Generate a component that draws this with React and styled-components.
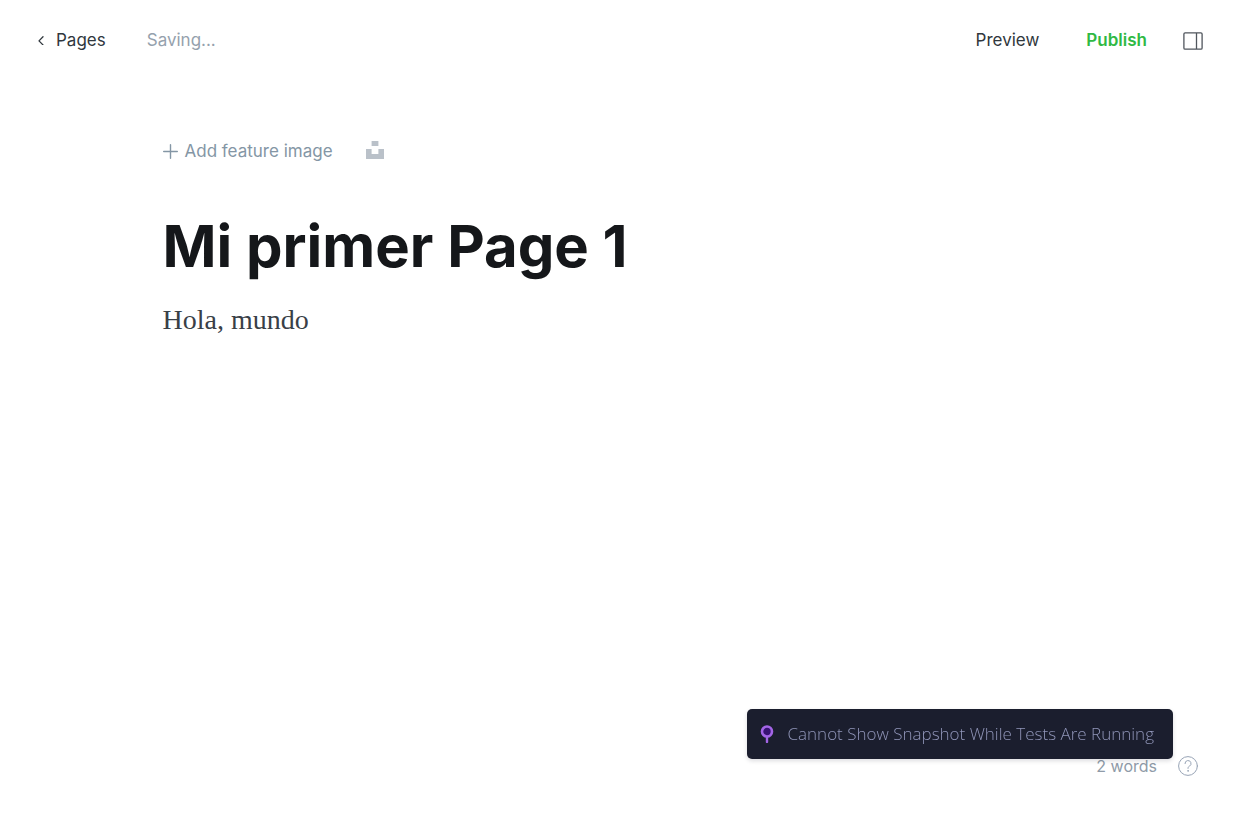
import React from "react";
import styled, { createGlobalStyle } from "styled-components";

const GlobalStyle = createGlobalStyle`
  *, *::before, *::after { box-sizing: border-box; }
  body {
    margin: 0;
    background: #fff;
    color: #394047;
    font-family: Inter, "Liberation Sans", sans-serif;
    font-size: 17px;
    line-height: 24px;
  }
`;

const Editor = styled.div`
  display: flex;
  flex-direction: column;
  min-height: 100vh;
`;

const TopBar = styled.header`
  display: flex;
  align-items: center;
  justify-content: space-between;
  padding: 28px 47px 28px 37px;
`;

const BarGroup = styled.div`
  display: flex;
  align-items: center;
  gap: ${(p) => p.$gap}px;
`;

const BackLink = styled.a`
  display: flex;
  align-items: center;
  gap: 11px;
  color: #30373d;
  text-decoration: none;
`;

const Status = styled.span`
  color: #95a1ad;
`;

const TextButton = styled.button`
  display: flex;
  align-items: center;
  gap: 7px;
  padding: 0;
  border: 0;
  background: none;
  font: inherit;
  font-weight: ${(p) => (p.$strong ? 600 : 400)};
  color: ${(p) => p.$color};
  cursor: pointer;
`;

const IconButton = styled.button`
  display: flex;
  padding: 0;
  border: 0;
  background: none;
  color: ${(p) => p.$color};
  cursor: pointer;
`;

const Canvas = styled.main`
  flex: 1;
  width: 74%;
  margin: 0 auto;
  padding-top: 59px;
`;

const FeatureRow = styled.div`
  display: flex;
  align-items: center;
  gap: 33px;
`;

const Title = styled.h1`
  margin: 47px 0 0;
  color: #15171a;
  font-size: 58px;
  font-weight: 700;
  line-height: 72px;
`;

const Body = styled.p`
  margin: 18px 0 0;
  font-family: "Liberation Serif", serif;
  font-size: 28px;
  line-height: 40px;
`;

const Footer = styled.footer`
  display: flex;
  align-items: center;
  justify-content: flex-end;
  gap: 21px;
  padding: 0 52px 47px;
  color: #8f9ba8;
  font-size: 16px;
`;

const Toast = styled.div`
  position: fixed;
  right: 77px;
  bottom: 66px;
  display: flex;
  align-items: center;
  gap: 14px;
  height: 50px;
  padding: 0 19px 0 13px;
  border-radius: 5px;
  background: #1b1e2e;
  box-shadow: 0 2px 4px rgba(27, 30, 46, 0.15);
  color: #9095b8;
  font-family: "Open Sans", "Noto Sans", sans-serif;
  font-size: 17px;
  font-weight: 300;
  white-space: nowrap;
`;

export default function App() {
  return (
    <>
      <GlobalStyle />
      <Editor>
        <TopBar>
          <BarGroup $gap={41}>
            <BackLink href="#pages">
              <svg width="8" height="10" viewBox="0 0 8 10" fill="none" stroke="currentColor" strokeWidth="1.3" strokeLinecap="round" strokeLinejoin="round">
                <path d="M6 1.8 2 5.9l4 4" />
              </svg>
              Pages
            </BackLink>
            <Status role="status">Saving...</Status>
          </BarGroup>
          <BarGroup $gap={47}>
            <TextButton type="button" $color="#30373d">Preview</TextButton>
            <BarGroup $gap={36}>
              <TextButton type="button" $color="#30b944" $strong>Publish</TextButton>
              <IconButton type="button" aria-label="Settings" $color="#50565d">
                <svg width="20" height="20" viewBox="0 0 20 20" fill="none" stroke="currentColor" strokeWidth="1.3">
                  <rect x="0.9" y="2.9" width="18.2" height="16.2" rx="1.2" />
                  <path d="M13.5 3v16" />
                </svg>
              </IconButton>
            </BarGroup>
          </BarGroup>
        </TopBar>

        <Canvas>
          <FeatureRow>
            <TextButton type="button" $color="#8496a5">
              <svg width="15" height="15" viewBox="0 0 15 15" fill="none" stroke="currentColor" strokeWidth="1.4" strokeLinecap="round">
                <path d="M7.5 .7v13.6M.7 7.5h13.6" />
              </svg>
              Add feature image
            </TextButton>
            <IconButton type="button" aria-label="Search Unsplash" $color="#bac1c9">
              <svg width="18" height="20" viewBox="0 0 18 20" fill="currentColor">
                <path d="M5.6 0h6.8v5H5.6zM0 8h5.6v5h6.8V8H18v10H0z" />
              </svg>
            </IconButton>
          </FeatureRow>
          <Title>Mi primer Page 1</Title>
          <Body>Hola, mundo</Body>
        </Canvas>

        <Footer>
          <span>2 words</span>
          <IconButton type="button" aria-label="Help" $color="#97a3b5">
            <svg width="20" height="20" viewBox="0 0 20 20" fill="none" stroke="currentColor" strokeLinecap="round">
              <circle cx="10" cy="10" r="9.4" />
              <path d="M7 7.6a3 3 0 1 1 4.4 2.6c-.9.5-1.4 1-1.4 2.2" />
              <circle cx="10" cy="14.9" r=".3" fill="currentColor" />
            </svg>
          </IconButton>
        </Footer>
      </Editor>

      <Toast role="alert">
        <svg width="14" height="18" viewBox="0 0 14 18" fill="none">
          <path d="M7 11v6" stroke="#a365e6" strokeWidth="2.4" strokeLinecap="round" />
          <circle cx="7" cy="6.5" r="5" fill="#381272" stroke="#a365e6" strokeWidth="2.6" />
        </svg>
        Cannot Show Snapshot While Tests Are Running
      </Toast>
    </>
  );
}
